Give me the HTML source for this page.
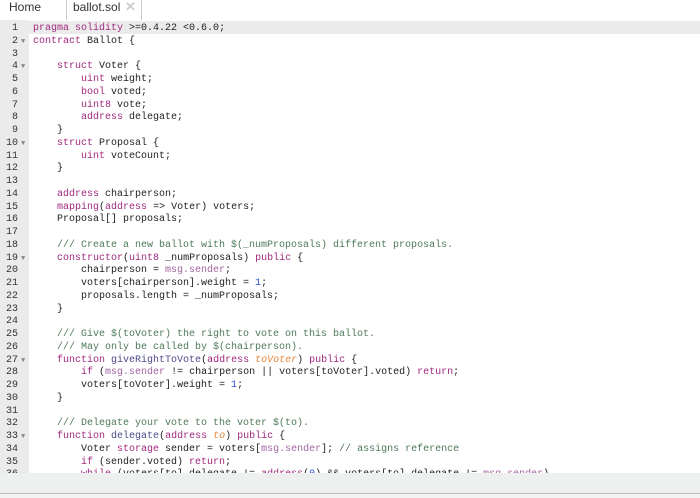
<!DOCTYPE html>
<html><head><meta charset="utf-8"><style>
body{margin:0;width:700px;height:498px;overflow:hidden;background:#fff;font-family:"Liberation Sans",sans-serif;position:relative}
.tabs{position:absolute;top:0;left:0;width:700px;height:20px;background:#fff}
.t1{position:absolute;left:9px;top:0px;font-size:12px;color:#333}
.t2{position:absolute;left:66px;top:0;width:76px;height:20px;border-left:1px solid #ccc;border-right:1px solid #ccc;box-sizing:border-box}
.t2 span{position:absolute;left:6px;top:0;font-size:12px;color:#333}
.t2 b{position:absolute;left:58px;top:-1px;font-size:13px;color:#ccc;font-weight:bold}
.gut{position:absolute;left:0;top:20px;width:29px;height:453px;background:#ebebeb}
.act{position:absolute;left:29px;top:21px;width:671px;height:13px;background:#ebebeb}
.code{position:absolute;left:0;top:20px;width:700px;height:453px;overflow:hidden;font-family:"Liberation Mono",monospace;font-size:10px;line-height:12.76px;color:#222}
.in{position:absolute;left:0;top:3px;width:700px}
.l{height:12.76px;position:relative}
.n{position:absolute;left:0;width:18px;text-align:right;color:#333}
.f{position:absolute;left:21px;color:#888;font-size:7px}
.c{position:absolute;left:33px;white-space:pre}
.k{color:#a1297f}.cm{color:#4f7a5a}.nm{color:#2a4fd0}.p{color:#e8873a;font-style:italic}.s{color:#a166a0}.fn{color:#4a4a8a}
.bot{position:absolute;left:0;top:473px;width:700px;height:20px;background:#eef0f0}
.bl{position:absolute;left:0;top:493px;width:700px;height:1px;background:#bbb}
.bb{position:absolute;left:0;top:494px;width:700px;height:4px;background:#f3f3f3}
</style></head><body>
<div class="tabs"><div class="t1">Home</div><div class="t2"><span>ballot.sol</span><b>✕</b></div></div>
<div class="gut"></div><div class="act"></div>
<div class="code"><div class="in"><div class="l"><span class="n">1</span><span class="c"><span class="k">pragma</span> <span class="k">solidity</span> &gt;=0.4.22 &lt;0.6.0;</span></div><div class="l"><span class="n">2</span><span class="f">▼</span><span class="c"><span class="k">contract</span> Ballot {</span></div><div class="l"><span class="n">3</span></div><div class="l"><span class="n">4</span><span class="f">▼</span><span class="c">    <span class="k">struct</span> Voter {</span></div><div class="l"><span class="n">5</span><span class="c">        <span class="k">uint</span> weight;</span></div><div class="l"><span class="n">6</span><span class="c">        <span class="k">bool</span> voted;</span></div><div class="l"><span class="n">7</span><span class="c">        <span class="k">uint8</span> vote;</span></div><div class="l"><span class="n">8</span><span class="c">        <span class="k">address</span> delegate;</span></div><div class="l"><span class="n">9</span><span class="c">    }</span></div><div class="l"><span class="n">10</span><span class="f">▼</span><span class="c">    <span class="k">struct</span> Proposal {</span></div><div class="l"><span class="n">11</span><span class="c">        <span class="k">uint</span> voteCount;</span></div><div class="l"><span class="n">12</span><span class="c">    }</span></div><div class="l"><span class="n">13</span></div><div class="l"><span class="n">14</span><span class="c">    <span class="k">address</span> chairperson;</span></div><div class="l"><span class="n">15</span><span class="c">    <span class="k">mapping</span>(<span class="k">address</span> =&gt; Voter) voters;</span></div><div class="l"><span class="n">16</span><span class="c">    Proposal[] proposals;</span></div><div class="l"><span class="n">17</span></div><div class="l"><span class="n">18</span><span class="c"><span class="cm">    /// Create a new ballot with $(_numProposals) different proposals.</span></span></div><div class="l"><span class="n">19</span><span class="f">▼</span><span class="c">    <span class="k">constructor</span>(<span class="k">uint8</span> _numProposals) <span class="k">public</span> {</span></div><div class="l"><span class="n">20</span><span class="c">        chairperson = <span class="s">msg.sender</span>;</span></div><div class="l"><span class="n">21</span><span class="c">        voters[chairperson].weight = <span class="nm">1</span>;</span></div><div class="l"><span class="n">22</span><span class="c">        proposals.length = _numProposals;</span></div><div class="l"><span class="n">23</span><span class="c">    }</span></div><div class="l"><span class="n">24</span></div><div class="l"><span class="n">25</span><span class="c"><span class="cm">    /// Give $(toVoter) the right to vote on this ballot.</span></span></div><div class="l"><span class="n">26</span><span class="c"><span class="cm">    /// May only be called by $(chairperson).</span></span></div><div class="l"><span class="n">27</span><span class="f">▼</span><span class="c">    <span class="k">function</span> <span class="fn">giveRightToVote</span>(<span class="k">address</span> <span class="p">toVoter</span>) <span class="k">public</span> {</span></div><div class="l"><span class="n">28</span><span class="c">        <span class="k">if</span> (<span class="s">msg.sender</span> != chairperson || voters[toVoter].voted) <span class="k">return</span>;</span></div><div class="l"><span class="n">29</span><span class="c">        voters[toVoter].weight = <span class="nm">1</span>;</span></div><div class="l"><span class="n">30</span><span class="c">    }</span></div><div class="l"><span class="n">31</span></div><div class="l"><span class="n">32</span><span class="c"><span class="cm">    /// Delegate your vote to the voter $(to).</span></span></div><div class="l"><span class="n">33</span><span class="f">▼</span><span class="c">    <span class="k">function</span> <span class="fn">delegate</span>(<span class="k">address</span> <span class="p">to</span>) <span class="k">public</span> {</span></div><div class="l"><span class="n">34</span><span class="c">        Voter <span class="k">storage</span> sender = voters[<span class="s">msg.sender</span>]; <span class="cm">// assigns reference</span></span></div><div class="l"><span class="n">35</span><span class="c">        <span class="k">if</span> (sender.voted) <span class="k">return</span>;</span></div><div class="l"><span class="n">36</span><span class="c">        <span class="k">while</span> (voters[to].delegate != <span class="k">address</span>(<span class="nm">0</span>) &amp;&amp; voters[to].delegate != <span class="s">msg.sender</span>)</span></div></div></div>
<div class="bot"></div><div class="bl"></div><div class="bb"></div>
</body></html>
